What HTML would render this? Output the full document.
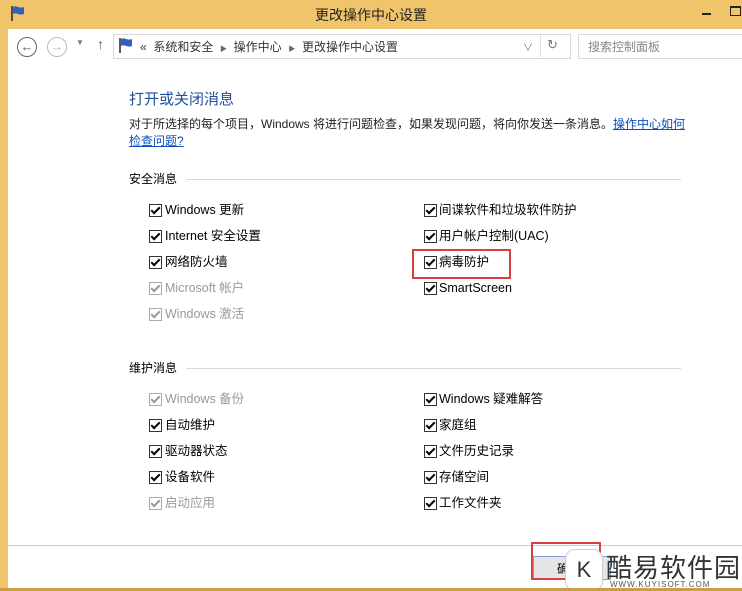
<!DOCTYPE html><html><head><meta charset="utf-8"><style>
body{margin:0;width:742px;height:591px;overflow:hidden;background:#f0c46a;font-family:"Liberation Sans","Noto Sans CJK SC",sans-serif;font-size:12px;color:#000;position:relative}
.a{position:absolute;white-space:nowrap}
.win{position:absolute;left:8px;top:29px;width:734px;height:562px;background:#fff}
.cb{position:absolute;width:11px;height:11px;border:1px solid #333;background:#fff}
.cb::after{content:"";position:absolute;left:3px;top:0px;width:3px;height:7px;border:solid #000;border-width:0 2px 2px 0;transform:rotate(45deg)}
.g .cb{border-color:#aaa}.g .cb::after{border-color:#999}.g span{color:#999}
.it span{position:absolute;top:0;line-height:14px;font-size:12.5px}
.hr{position:absolute;height:1px;background:#d8d8d8}
</style></head><body>
<svg class="a" style="left:10px;top:5px" width="16" height="16"><path d="M2 1v15" stroke="#224" stroke-width="1.5"/><path d="M3 2c4-2 6 2 11 0v7c-5 2-7-2-11 0z" fill="#3060c0"/></svg>
<div class="a" style="left:0;width:742px;text-align:center;top:5px;font-size:14px;color:#222">更改操作中心设置</div>
<div class="a" style="left:702px;top:13px;width:9px;height:2px;background:#222"></div>
<div class="a" style="left:730px;top:6px;width:9px;height:7px;border:1px solid #222;border-top-width:2px"></div>
<div class="win"></div>
<div class="a" style="left:17px;top:37px;width:18px;height:18px;border:1px solid #666;border-radius:50%;text-align:center;line-height:18px;color:#555;font-size:13px">←</div>
<div class="a" style="left:47px;top:37px;width:18px;height:18px;border:1px solid #bbb;border-radius:50%;text-align:center;line-height:18px;color:#bbb;font-size:13px">→</div>
<div class="a" style="left:76px;top:38px;color:#777;font-size:8px">▼</div>
<div class="a" style="left:97px;top:36px;color:#555;font-size:14px">↑</div>
<div class="a" style="left:113px;top:34px;width:456px;height:23px;border:1px solid #d9d9d9"></div>
<svg class="a" style="left:118px;top:37px" width="16" height="16"><path d="M2 1v15" stroke="#224" stroke-width="1.5"/><path d="M3 2c4-2 6 2 11 0v7c-5 2-7-2-11 0z" fill="#3060c0"/></svg>
<div class="a" style="left:140px;top:38px;color:#333">«&nbsp;&nbsp;系统和安全&nbsp;&nbsp;<span style="font-size:7px;color:#666">▶</span>&nbsp;&nbsp;操作中心&nbsp;&nbsp;<span style="font-size:7px;color:#666">▶</span>&nbsp;&nbsp;更改操作中心设置</div>
<div class="a" style="left:523px;top:39px;color:#777;font-size:10px">∨</div>
<div class="a" style="left:540px;top:35px;width:1px;height:22px;background:#e0e0e0"></div>
<div class="a" style="left:547px;top:37px;color:#777;font-size:13px">↻</div>
<div class="a" style="left:578px;top:34px;width:170px;height:23px;border:1px solid #d9d9d9"></div>
<div class="a" style="left:588px;top:38px;color:#888">搜索控制面板</div>
<div class="a" style="left:129px;top:88px;font-size:15px;color:#1e4f9c">打开或关闭消息</div>
<div class="a" style="left:129px;top:115px;color:#222">对于所选择的每个项目，Windows 将进行问题检查，如果发现问题，将向你发送一条消息。<span style="color:#0a4fc0;text-decoration:underline">操作中心如何</span></div>
<div class="a" style="left:129px;top:132px;color:#0a4fc0;text-decoration:underline">检查问题?</div>
<div class="a" style="left:129px;top:170px">安全消息</div><div class="hr" style="left:186px;top:179px;width:495px"></div>
<div class="a" style="left:129px;top:359px">维护消息</div><div class="hr" style="left:186px;top:368px;width:495px"></div>
<div class="a it" style="left:149px;top:203px"><div class="cb" style="left:0;top:1px"></div><span style="left:16px">Windows 更新</span></div>
<div class="a it" style="left:149px;top:229px"><div class="cb" style="left:0;top:1px"></div><span style="left:16px">Internet 安全设置</span></div>
<div class="a it" style="left:149px;top:255px"><div class="cb" style="left:0;top:1px"></div><span style="left:16px">网络防火墙</span></div>
<div class="a it g" style="left:149px;top:281px"><div class="cb" style="left:0;top:1px"></div><span style="left:16px">Microsoft 帐户</span></div>
<div class="a it g" style="left:149px;top:307px"><div class="cb" style="left:0;top:1px"></div><span style="left:16px">Windows 激活</span></div>
<div class="a it" style="left:424px;top:203px"><div class="cb" style="left:0;top:1px"></div><span style="left:15px">间谍软件和垃圾软件防护</span></div>
<div class="a it" style="left:424px;top:229px"><div class="cb" style="left:0;top:1px"></div><span style="left:15px">用户帐户控制(UAC)</span></div>
<div class="a it" style="left:424px;top:255px"><div class="cb" style="left:0;top:1px"></div><span style="left:15px">病毒防护</span></div>
<div class="a it" style="left:424px;top:281px"><div class="cb" style="left:0;top:1px"></div><span style="left:15px">SmartScreen</span></div>
<div class="a" style="left:412px;top:249px;width:95px;height:26px;border:2px solid #d94040"></div>
<div class="a it g" style="left:149px;top:392px"><div class="cb" style="left:0;top:1px"></div><span style="left:16px">Windows 备份</span></div>
<div class="a it" style="left:149px;top:418px"><div class="cb" style="left:0;top:1px"></div><span style="left:16px">自动维护</span></div>
<div class="a it" style="left:149px;top:444px"><div class="cb" style="left:0;top:1px"></div><span style="left:16px">驱动器状态</span></div>
<div class="a it" style="left:149px;top:470px"><div class="cb" style="left:0;top:1px"></div><span style="left:16px">设备软件</span></div>
<div class="a it g" style="left:149px;top:496px"><div class="cb" style="left:0;top:1px"></div><span style="left:16px">启动应用</span></div>
<div class="a it" style="left:424px;top:392px"><div class="cb" style="left:0;top:1px"></div><span style="left:15px">Windows 疑难解答</span></div>
<div class="a it" style="left:424px;top:418px"><div class="cb" style="left:0;top:1px"></div><span style="left:15px">家庭组</span></div>
<div class="a it" style="left:424px;top:444px"><div class="cb" style="left:0;top:1px"></div><span style="left:15px">文件历史记录</span></div>
<div class="a it" style="left:424px;top:470px"><div class="cb" style="left:0;top:1px"></div><span style="left:15px">存储空间</span></div>
<div class="a it" style="left:424px;top:496px"><div class="cb" style="left:0;top:1px"></div><span style="left:15px">工作文件夹</span></div>
<div class="hr" style="left:8px;top:545px;width:734px;background:#ccc"></div>
<div class="a" style="left:8px;top:546px;width:734px;height:42px;background:#fff"></div>
<div class="a" style="left:533px;top:556px;width:76px;height:22px;background:#e6e6e6;border:1px solid #7da2ce"></div>
<div class="a" style="left:557px;top:560px">确</div>
<div class="a" style="left:531px;top:542px;width:66px;height:34px;border:2px solid #d94040"></div>
<div class="a" style="left:565px;top:549px;width:36px;height:40px;background:#fff;border:1px solid #ccc;border-radius:10px;text-align:center;line-height:40px;font-size:22px;color:#333">K</div>
<div class="a" style="left:606px;top:548px;font-size:26px;color:#333;letter-spacing:1px">酷易软件园</div>
<div class="a" style="left:610px;top:580px;font-size:8px;color:#555;letter-spacing:1px">WWW.KUYISOFT.COM</div>
<div class="a" style="left:0;top:588px;width:742px;height:3px;background:#c9a040"></div>
</body></html>
